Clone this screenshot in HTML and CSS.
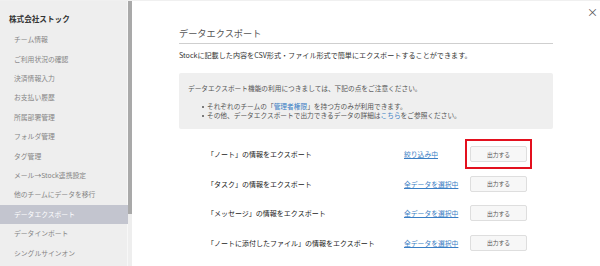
FILE: index.html
```html
<!DOCTYPE html>
<html lang="ja">
<head>
    <meta charset="UTF-8">
    <meta name="viewport" content="width=device-width, initial-scale=1.0">
    <title>データエクスポート</title>
    <link rel="stylesheet" href="styles.css">
</head>
<body>
    <div class="settings">
        <div class="sidebar">
            <div class="menu">
                <div class="team-name">株式会社ストック</div>
                <div class="menu-item">チーム情報</div>
                <div class="menu-item">ご利用状況の確認</div>
                <div class="menu-item">決済情報入力</div>
                <div class="menu-item">お支払い履歴</div>
                <div class="menu-item">所属部署管理</div>
                <div class="menu-item">フォルダ管理</div>
                <div class="menu-item">タグ管理</div>
                <div class="menu-item">メール→Stock連携設定</div>
                <div class="menu-item">他のチームにデータを移行</div>
                <div class="menu-item active">データエクスポート</div>
                <div class="menu-item">データインポート</div>
                <div class="menu-item">シングルサインオン</div>
            </div>
            <div class="scroll-track">
                <div class="scroll-thumb"></div>
            </div>
        </div>

        <div class="main">
            <div class="close">×</div>
            <div class="content">
                <h2 class="page-title">データエクスポート</h2>
                <p class="lead">Stockに記載した内容をCSV形式・ファイル形式で簡単にエクスポートすることができます。</p>

                <div class="notice">
                    <p>データエクスポート機能の利用につきましては、下記の点をご注意ください。</p>
                    <ul>
                        <li>それぞれのチームの「<a href="#">管理者権限</a>」を持つ方のみが利用できます。</li>
                        <li>その他、データエクスポートで出力できるデータの詳細は<a href="#">こちら</a>をご参照ください。</li>
                    </ul>
                </div>

                <div class="export-list">
                    <div class="export-row">
                        <div class="export-label">「ノート」の情報をエクスポート</div>
                        <a class="export-filter" href="#">絞り込み中</a>
                        <div class="export-action highlight">
                            <button class="export-btn">出力する</button>
                        </div>
                    </div>
                    <div class="export-row">
                        <div class="export-label">「タスク」の情報をエクスポート</div>
                        <a class="export-filter" href="#">全データを選択中</a>
                        <div class="export-action">
                            <button class="export-btn">出力する</button>
                        </div>
                    </div>
                    <div class="export-row">
                        <div class="export-label">「メッセージ」の情報をエクスポート</div>
                        <a class="export-filter" href="#">全データを選択中</a>
                        <div class="export-action">
                            <button class="export-btn">出力する</button>
                        </div>
                    </div>
                    <div class="export-row">
                        <div class="export-label">「ノートに添付したファイル」の情報をエクスポート</div>
                        <a class="export-filter" href="#">全データを選択中</a>
                        <div class="export-action">
                            <button class="export-btn">出力する</button>
                        </div>
                    </div>
                </div>
            </div>
        </div>
    </div>
</body>
</html>
```

FILE: styles.css
```css
body {
    margin: 0;
    padding: 0;
    font-family: "Noto Sans CJK JP", "Liberation Sans", sans-serif;
    color: #333;
    background: #fff;
    overflow: hidden;
}
.settings {
    display: flex;
    height: 266px;
    border-top: 1px solid #f0f0f0;
    box-sizing: border-box;
}

/* sidebar */
.sidebar {
    display: flex;
    width: 132px;
    flex-shrink: 0;
    background: #eeeeee;
}
.menu {
    width: 127px;
    padding-top: 8px;
    border-right: 1px solid #f7f7f7;
}
.team-name {
    padding-left: 9px;
    height: 20px;
    line-height: 20px;
    font-size: 7.6px;
    font-weight: bold;
    color: #333;
    margin-bottom: 1.3px;
}
.menu-item {
    height: 19.4px;
    line-height: 19.4px;
    padding-left: 14px;
    font-size: 6.8px;
    color: #858585;
    white-space: nowrap;
}
.menu-item.active {
    background: #c3c5cf;
    color: #fff;
    margin-right: -1px;
}
.scroll-track {
    width: 4px;
}
.scroll-thumb {
    height: 213px;
    background: #a9a9a9;
}

/* main */
.main {
    flex: 1;
    position: relative;
    padding: 0 47px;
}
.close {
    position: absolute;
    top: 4px;
    right: 2px;
    font-size: 11px;
    line-height: 14px;
    color: #555;
}
.content {
    width: 374px;
}
.page-title {
    margin: 25px 0 0;
    padding-bottom: 3px;
    font-size: 9.2px;
    line-height: 14px;
    font-weight: normal;
    color: #555;
    border-bottom: 1px solid #cfcfcf;
}
.lead {
    margin: 5px 0 0;
    font-size: 7.1px;
    line-height: 12px;
    color: #333;
    white-space: nowrap;
}
.notice {
    margin-top: 12px;
    height: 56px;
    box-sizing: border-box;
    padding: 9px 9px 0;
    background: #efefef;
    border-radius: 2px;
    font-size: 6.7px;
    color: #555;
}
.notice p {
    margin: 0;
    line-height: 12px;
}
.notice ul {
    margin: 8px 0 0;
    padding-left: 19px;
    list-style: none;
}
.notice li {
    position: relative;
    line-height: 9px;
    white-space: nowrap;
}
.notice li::before {
    content: "";
    position: absolute;
    left: -5px;
    top: 4px;
    width: 2px;
    height: 2px;
    border-radius: 50%;
    background: #555;
}
.notice a {
    color: #3a7ec4;
    text-decoration: none;
}

/* export rows */
.export-list {
    margin-top: 10.3px;
}
.export-row {
    display: flex;
    align-items: center;
    height: 29.5px;
    padding-left: 28px;
}
.export-label {
    width: 197px;
    font-size: 7px;
    color: #1a1a1a;
    white-space: nowrap;
    overflow: hidden;
}
.export-filter {
    width: 66px;
    font-size: 6.8px;
    color: #3a7ec4;
    text-decoration: underline;
    white-space: nowrap;
}
.export-btn {
    display: block;
    width: 57px;
    height: 16px;
    padding: 0;
    border: 1px solid #dedede;
    border-radius: 2px;
    background: #f7f7f7;
    font-family: "Noto Sans CJK JP", sans-serif;
    font-size: 5.8px;
    color: #555;
}
.export-action.highlight {
    margin: -7px 0 -7px -5px;
    padding: 5px 3px;
    border: 2px solid #e3101e;
}
```
